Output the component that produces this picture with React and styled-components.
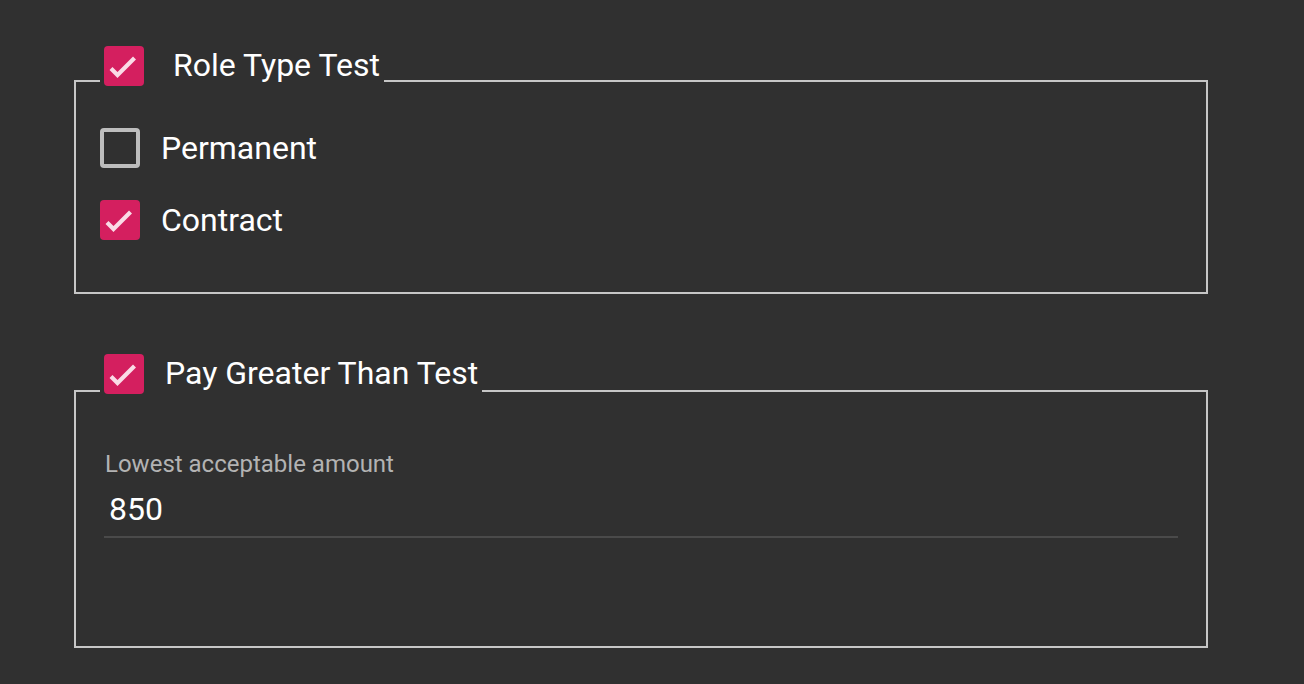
import React, { useState } from 'react'
import styled, { createGlobalStyle } from 'styled-components'

const GlobalStyle = createGlobalStyle`
  html, body {
    margin: 0;
    padding: 0;
    background: #303030;
  }
  body {
    font-family: Roboto, "Noto Sans", sans-serif;
    color: #ffffff;
  }
`;

const Page = styled.div`
  display: flex;
  flex-direction: column;
  gap: 60px;
  padding: 46px 96px 36px 74px;
  min-height: 100vh;
  box-sizing: border-box;
  background: #303030;
`;

const Group = styled.fieldset`
  margin: 0;
  min-width: 0;
  border: 2px solid #c6c6c6;
  padding: ${p => p.$pad};
`;

const Legend = styled.legend`
  display: flex;
  align-items: center;
  padding: 0 4px ${p => p.$below}px 4px;
  margin: 0;
`;

const LegendText = styled.span`
  font-size: 32px;
  line-height: 1.172;
  color: #ffffff;
  margin-left: ${p => p.$indent}px;
`;

const Box = styled.button`
  width: 40px;
  height: 40px;
  flex: none;
  padding: 0;
  border-radius: 4px;
  cursor: pointer;
  box-sizing: border-box;
  display: flex;
  align-items: center;
  justify-content: center;
  background: ${p => (p.$on ? '#d41f5f' : 'transparent')};
  border: ${p => (p.$on ? 'none' : '4px solid #bdbdbd')};
  svg { display: block; }
`;

const Options = styled.div`
  display: flex;
  flex-direction: column;
  gap: 32px;
`;

const Option = styled.label`
  display: flex;
  align-items: center;
  gap: 21px;
  cursor: pointer;
`;

const OptionText = styled.span`
  font-size: 32px;
  line-height: 1.172;
  color: #ffffff;
  padding-top: 2px;
`;

const Field = styled.div`
  margin: 4px;
  display: flex;
  flex-direction: column;
  gap: 14px;
  border-bottom: 2px solid #4a4a4a;
  padding-bottom: 8px;
`;

const FieldLabel = styled.label`
  font-size: 24px;
  line-height: 24px;
  color: #b3b3b3;
  padding-left: 1px;
`;

const Input = styled.input`
  font-family: Roboto, "Noto Sans", sans-serif;
  font-size: 32px;
  line-height: 38px;
  height: 38px;
  padding: 0 0 0 5px;
  border: none;
  outline: none;
  background: transparent;
  color: #ffffff;
`;

const Check = ({ on, onClick }) => (
  <Box type="button" $on={on} onClick={onClick}>
    {on && (
      <svg width="40" height="40" viewBox="0 0 40 40">
        <path d="M7 22.5 L13.5 29 L30.5 12" fill="none" stroke="#fadbe6" strokeWidth="4.2" />
      </svg>
    )}
  </Box>
);

export default function App() {
  const [roleOn, setRoleOn] = useState(true)
  const [payOn, setPayOn] = useState(true)
  const [perm, setPerm] = useState(false)
  const [contract, setContract] = useState(true)
  const [amount, setAmount] = useState('850')

  return (
    <>
      <GlobalStyle />
      <Page>
        <Group $pad="12px 24px 52px 24px">
          <Legend $below={30}>
            <Check on={roleOn} onClick={() => setRoleOn(!roleOn)} />
            <LegendText $indent={29}>Role Type Test</LegendText>
          </Legend>
          <Options>
            <Option>
              <Check on={perm} onClick={() => setPerm(!perm)} />
              <OptionText>Permanent</OptionText>
            </Option>
            <Option>
              <Check on={contract} onClick={() => setContract(!contract)} />
              <OptionText>Contract</OptionText>
            </Option>
          </Options>
        </Group>
        <Group $pad="20px 24px 104px 24px">
          <Legend $below={34}>
            <Check on={payOn} onClick={() => setPayOn(!payOn)} />
            <LegendText $indent={21}>Pay Greater Than Test</LegendText>
          </Legend>
          <Field>
            <FieldLabel htmlFor="amount">Lowest acceptable amount</FieldLabel>
            <Input id="amount" value={amount} onChange={e => setAmount(e.target.value)} />
          </Field>
        </Group>
      </Page>
    </>
  )
}
